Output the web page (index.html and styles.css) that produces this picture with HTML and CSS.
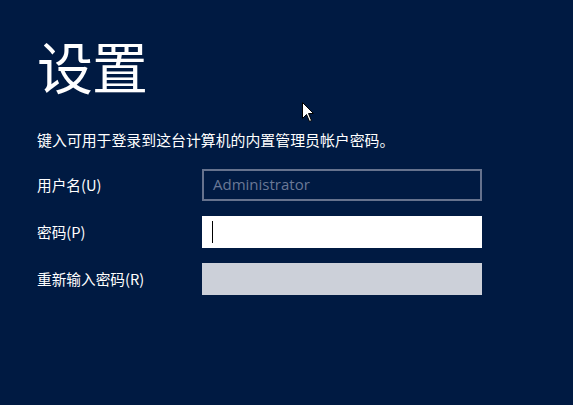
FILE: index.html
```html
<!DOCTYPE html>
<html lang="zh-CN">
<head>
<meta charset="utf-8">
<link rel="stylesheet" href="styles.css">
</head>
<body>
<main class="page">
  <h1 class="title">设置</h1>
  <p class="desc">键入可用于登录到这台计算机的内置管理员帐户密码。</p>
  <div class="form">
    <div class="row">
      <label class="label">用户名(U)</label>
      <div class="field field-user">Administrator</div>
    </div>
    <div class="row">
      <label class="label">密码(P)</label>
      <div class="field field-pass"><span class="caret"></span></div>
    </div>
    <div class="row">
      <label class="label">重新输入密码(R)</label>
      <div class="field field-disabled"></div>
    </div>
  </div>
  <svg class="pointer" width="12" height="20" viewBox="0 0 12 20">
    <path d="M0.5 0.5 L0.5 16.5 L4.5 12.5 L7.5 19.5 L9.5 18.5 L6.5 11.5 L11.5 11.5 Z" fill="#fff" stroke="#000" stroke-width="1"/>
  </svg>
</main>
</body>
</html>
```

FILE: styles.css
```css
html, body {
  margin: 0;
  padding: 0;
  background: #001a42;
}
.page {
  position: relative;
  width: 573px;
  height: 405px;
  box-sizing: border-box;
  padding: 30px 0 0 37px;
  font-family: "Noto Sans CJK SC", "Open Sans", sans-serif;
  color: #ffffff;
}
.title {
  margin: 0;
  font-size: 56px;
  font-weight: 400;
  line-height: 70px;
  letter-spacing: -1px;
}
.desc {
  margin: 29px 0 0 0;
  font-size: 14.9px;
  line-height: 22px;
}
.form {
  margin-top: 18px;
  display: flex;
  flex-direction: column;
  gap: 15px;
}
.row {
  display: flex;
  align-items: center;
  height: 32px;
}
.label {
  width: 165px;
  font-size: 14.67px;
  line-height: 20px;
}
.field {
  width: 280px;
  height: 32px;
  box-sizing: border-box;
}
.field-user {
  border: 2px solid #66728d;
  color: #6a7896;
  font-family: "Open Sans", "Noto Sans", sans-serif;
  font-size: 15px;
  line-height: 27px;
  padding-left: 9px;
}
.field-pass {
  background: #ffffff;
  display: flex;
  align-items: center;
  padding-left: 10px;
}
.caret {
  width: 1px;
  height: 22px;
  background: #000;
}
.field-disabled {
  background: #ccd0d9;
}
.pointer {
  position: absolute;
  left: 302px;
  top: 102px;
}
```
